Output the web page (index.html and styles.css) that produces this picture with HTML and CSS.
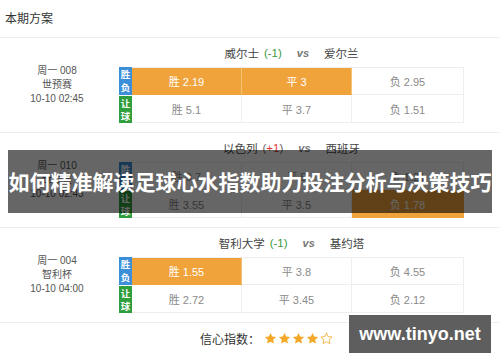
FILE: index.html
```html
<!DOCTYPE html>
<html lang="zh-CN">
<head>
<meta charset="utf-8">
<title>本期方案</title>
<link rel="stylesheet" href="styles.css">
</head>
<body>
<div class="page">
  <div class="title">本期方案</div>

  <div class="match">
    <div class="info"><div>周一 008</div><div>世预赛</div><div>10-10 02:45</div></div>
    <div class="main">
      <div class="teams"><span>威尔士</span><span class="hc neg">(-1)</span><span class="vs">vs</span><span>爱尔兰</span></div>
      <div class="odds">
        <div class="row">
          <div class="lbl blue">胜<br>负</div>
          <div class="cell hl">胜 2.19</div>
          <div class="cell hl">平 3</div>
          <div class="cell last">负 2.95</div>
        </div>
        <div class="row">
          <div class="lbl green">让<br>球</div>
          <div class="cell">胜 5.1</div>
          <div class="cell">平 3.7</div>
          <div class="cell last">负 1.51</div>
        </div>
      </div>
    </div>
  </div>

  <div class="match">
    <div class="info"><div>周一 010</div><div>世预赛</div><div>10-10 02:45</div></div>
    <div class="main">
      <div class="teams"><span>以色列</span><span class="hc pos">(<b>+1</b>)</span><span class="vs">vs</span><span>西班牙</span></div>
      <div class="odds">
        <div class="row">
          <div class="lbl blue">胜<br>负</div>
          <div class="cell">胜 9.7</div>
          <div class="cell">平 5</div>
          <div class="cell last">负 1.21</div>
        </div>
        <div class="row">
          <div class="lbl green">让<br>球</div>
          <div class="cell">胜 3.55</div>
          <div class="cell">平 3.5</div>
          <div class="cell last hl">负 1.78</div>
        </div>
      </div>
    </div>
  </div>

  <div class="match">
    <div class="info"><div>周一 004</div><div>智利杯</div><div>10-10 04:00</div></div>
    <div class="main">
      <div class="teams"><span>智利大学</span><span class="hc neg">(-1)</span><span class="vs">vs</span><span>基约塔</span></div>
      <div class="odds">
        <div class="row">
          <div class="lbl blue">胜<br>负</div>
          <div class="cell hl">胜 1.55</div>
          <div class="cell">平 3.8</div>
          <div class="cell last">负 4.55</div>
        </div>
        <div class="row">
          <div class="lbl green">让<br>球</div>
          <div class="cell">胜 2.72</div>
          <div class="cell">平 3.45</div>
          <div class="cell last">负 2.12</div>
        </div>
      </div>
    </div>
  </div>

  <div class="confidence">
    <span class="conf-label">信心指数：</span>
    <span class="stars">
      <svg class="star" viewBox="0 0 24 24"><path class="full" d="M12 1.8l3.1 6.6 7.2.9-5.3 5 1.4 7.1L12 17.9l-6.4 3.5 1.4-7.1-5.3-5 7.2-.9z"/></svg>
      <svg class="star" viewBox="0 0 24 24"><path class="full" d="M12 1.8l3.1 6.6 7.2.9-5.3 5 1.4 7.1L12 17.9l-6.4 3.5 1.4-7.1-5.3-5 7.2-.9z"/></svg>
      <svg class="star" viewBox="0 0 24 24"><path class="full" d="M12 1.8l3.1 6.6 7.2.9-5.3 5 1.4 7.1L12 17.9l-6.4 3.5 1.4-7.1-5.3-5 7.2-.9z"/></svg>
      <svg class="star" viewBox="0 0 24 24"><path class="full" d="M12 1.8l3.1 6.6 7.2.9-5.3 5 1.4 7.1L12 17.9l-6.4 3.5 1.4-7.1-5.3-5 7.2-.9z"/></svg>
      <svg class="star" viewBox="0 0 24 24"><path class="empty" d="M12 1.8l3.1 6.6 7.2.9-5.3 5 1.4 7.1L12 17.9l-6.4 3.5 1.4-7.1-5.3-5 7.2-.9z"/></svg>
    </span>
  </div>

  <div class="banner">如何精准解读足球心水指数助力投注分析与决策技巧</div>
  <div class="watermark">www.tinyo.net</div>
</div>
</body>
</html>
```

FILE: styles.css
```css
* { box-sizing: border-box; }
html, body { margin: 0; padding: 0; background: #fff; }
body {
  font-family: "Liberation Sans", "Noto Sans CJK SC", sans-serif;
  color: #333;
}
.page {
  position: relative;
  width: 500px;
  height: 362px;
  overflow: hidden;
}
.title {
  height: 38px;
  padding-left: 5px;
  line-height: 38px;
  font-size: 12px;
  color: #333;
  border-bottom: 1px solid #eee;
}
.match {
  display: flex;
  align-items: center;
  height: 95px;
  padding: 6px 36px 9px 0;
  border-bottom: 1px solid #eee;
}
.info {
  width: 114px;
  margin-right: 5px;
  text-align: center;
  font-size: 10px;
  line-height: 14px;
  color: #555;
  padding-top: 3px;
}
.main {
  flex: 1;
  display: flex;
  flex-direction: column;
}
.teams {
  height: 18px;
  margin-bottom: 5px;
  display: flex;
  justify-content: center;
  align-items: center;
  font-size: 11.5px;
  color: #444;
}
.hc { margin-left: 5px; }
.hc.neg { color: #3d9a3d; }
.hc.pos { color: #666; }
.hc.pos b { color: #e53935; font-weight: normal; }
.vs {
  margin: 0 15px;
  font-style: italic;
  font-weight: bold;
  color: #777;
  font-size: 11px;
}
.odds {
  display: flex;
  flex-direction: column;
}
.row {
  display: flex;
  height: 28px;
}
.lbl {
  width: 13px;
  display: flex;
  align-items: center;
  justify-content: center;
  text-align: center;
  font-size: 9.5px;
  line-height: 13px;
  color: #fff;
  font-weight: bold;
}
.lbl.blue { background: #3b8fd8; }
.lbl.green { background: #2f9e3c; border-top: 1px solid #fff; }
.cell {
  width: 110px;
  display: flex;
  align-items: center;
  justify-content: center;
  font-size: 11px;
  color: #8a8a8a;
  border-right: 1px solid #eee;
  border-bottom: 1px solid #eee;
}
.row:first-child .cell { border-top: 1px solid #eee; }
.cell.last { width: 112px; }
.cell.hl {
  background: #f0a33b;
  color: #fff;
  border-color: #f0a33b;
  border-right-color: #f5c27a;
}
.cell.last.hl { border-right-color: #f0a33b; }
.confidence {
  display: flex;
  align-items: center;
  height: 30px;
  padding-left: 200px;
  font-size: 12px;
  color: #333;
}
.conf-label { margin-right: 4px; }
.stars { display: flex; gap: 1px; }
.star { width: 13px; height: 13px; }
.star .full { fill: #f3a829; }
.star .empty { fill: none; stroke: #f3a829; stroke-width: 1.5; }
.banner {
  position: absolute;
  left: 8px;
  top: 150px;
  width: 484px;
  height: 63px;
  background: rgba(0, 0, 0, 0.6);
  color: #fff;
  font-family: "Noto Sans CJK SC", sans-serif;
  font-weight: bold;
  font-size: 21px;
  line-height: 63px;
  white-space: nowrap;
  text-align: center;
}
.watermark {
  position: absolute;
  left: 349px;
  top: 315px;
  width: 142px;
  height: 38px;
  background: #5e5e5e;
  color: #fff;
  font-family: "Liberation Sans", sans-serif;
  font-weight: bold;
  font-size: 18px;
  line-height: 38px;
  text-align: center;
}
```
